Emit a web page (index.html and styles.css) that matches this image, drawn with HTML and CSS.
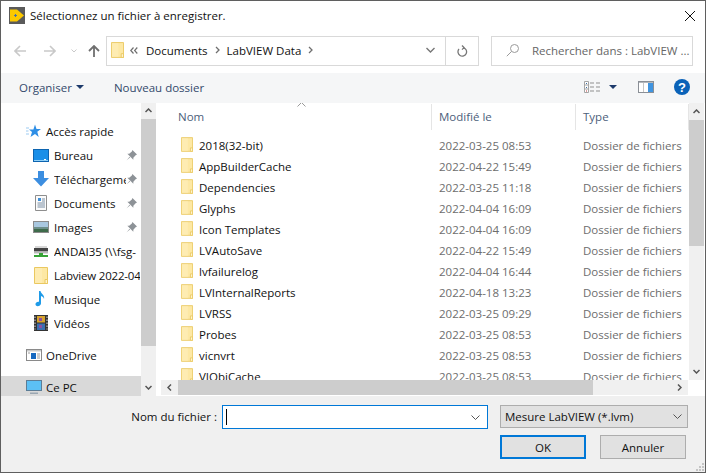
FILE: index.html
```html
<!DOCTYPE html>
<html>
	<head>
		<meta charset="UTF-8">
		<title>Sélectionnez un fichier à enregistrer.</title>
		<link rel="stylesheet" href="styles.css">
	</head>
	<body>
		<svg class="defs" width="0" height="0">
			<symbol id="folder" viewBox="0 0 14 17">
				<path d="M.5 .5H13.5V16.5H.5Z" fill="#fde8a4" stroke="#eac860"/>
				<path d="M1 1H8V16H1Z" fill="#fff0c0" opacity=".5"/>
				<path d="M11 12.5H13.5V16.5H11Z" fill="#fff4cf" stroke="#eac860"/>
			</symbol>
			<symbol id="pin" viewBox="0 0 12 12">
				<path d="M7 0 12 5 10.500 5.600 8 8.500 8 10.500 1.500 4 3.500 4 6.400 1.500Z" fill="#8d9297"/>
				<path d="M4 7.400 .5 11.500 4.600 8Z" fill="#8d9297"/>
			</symbol>
		</svg>

		<div id="box">
			<header class="title">
				<svg class="app" width="16" height="17" viewBox="0 0 16 17">
					<rect width="16" height="17" fill="#5a5a5a"/>
					<path d="M1 2.500H8L15 8.500 8 14.500H1Z" fill="#fcc800"/>
					<path d="M5 8.500H8M6.500 7V10" stroke="#4a6fa8"/>
				</svg>
				<span class="title-text">Sélectionnez un fichier à enregistrer.</span>
				<svg class="close" width="10" height="10" viewBox="0 0 10 10"><path d="M0 0 10 10M10 0 0 10" stroke="#111" stroke-width="1"/></svg>
			</header>

			<div class="nav">
				<svg class="ico-back" width="12" height="12" viewBox="0 0 12 12"><path d="M6 1 1 6 6 11M1 6H12" fill="none" stroke="#c9c9c9" stroke-width="1.6"/></svg>
				<svg class="ico-fwd" width="12" height="12" viewBox="0 0 12 12"><path d="M6 1 11 6 6 11M11 6H0" fill="none" stroke="#c9c9c9" stroke-width="1.6"/></svg>
				<svg class="ico-drop" width="6" height="4" viewBox="0 0 6 4"><path d="M.5 .5 3 3 5.5 .5" fill="none" stroke="#c9c9c9"/></svg>
				<svg class="ico-up" width="12" height="12" viewBox="0 0 12 12"><path d="M1 6 6 1 11 6M6 1V12" fill="none" stroke="#6f6f6f" stroke-width="1.8"/></svg>

				<div class="address">
					<svg class="addr-folder" width="13" height="16"><use href="#folder"/></svg>
					<svg class="crumb-more" width="8" height="7" viewBox="0 0 8 7"><path d="M3.500 .5 .8 3.500 3.500 6.500M7.300 .5 4.600 3.500 7.300 6.500" fill="none" stroke="#6f6f6f" stroke-width="1.200"/></svg>
					<span class="crumb">Documents</span>
					<svg class="crumb-sep" width="5" height="8" viewBox="0 0 5 8"><path d="M1 1 4 4 1 7" fill="none" stroke="#6f6f6f" stroke-width="1.3"/></svg>
					<span class="crumb">LabVIEW Data</span>
					<svg class="crumb-sep" width="5" height="8" viewBox="0 0 5 8"><path d="M1 1 4 4 1 7" fill="none" stroke="#6f6f6f" stroke-width="1.3"/></svg>
					<span class="grow"></span>
					<svg class="addr-drop" width="9" height="6" viewBox="0 0 9 6"><path d="M.5 1 4.5 5 8.5 1" fill="none" stroke="#777" stroke-width="1.4"/></svg>
					<div class="refresh">
						<svg width="11" height="12" viewBox="0 0 11 12"><path d="M6.2 2.6A4.3 4.3 0 1 1 2 4M5 .5 7 2.6 5 4.6" fill="none" stroke="#777" stroke-width="1.3"/></svg>
					</div>
				</div>

				<div class="search">
					<svg width="14" height="14" viewBox="0 0 14 14"><circle cx="8.5" cy="5.5" r="4" fill="none" stroke="#9a9a9a"/><path d="M5.5 8.5 .8 13.2" stroke="#9a9a9a"/></svg>
					<span>Rechercher dans : LabVIEW ...</span>
				</div>
			</div>

			<div class="toolbar">
				<span class="tool">Organiser</span>
				<span class="caret"></span>
				<span class="tool new-folder">Nouveau dossier</span>
				<span class="grow"></span>
				<svg class="view-ico" width="16" height="12" viewBox="0 0 16 12">
					<path d="M.5 .5H4.5V11.5H.5Z" fill="#fff" stroke="#a5a5a5"/>
					<path d="M1 4H4M1 8H4" stroke="#a5a5a5"/>
					<path d="M2 2H3V3H2Z" fill="#3a6ea5"/><path d="M2 6H3V7H2Z" fill="#3a6ea5"/><path d="M2 9.500H3V10.500H2Z" fill="#c03a3a"/>
					<path d="M6 2H10M12 2H16M6 6H10M12 6H16M6 10H10M12 10H16" stroke="#8f8f8f"/>
				</svg>
				<span class="caret view-caret"></span>
				<svg class="pane-ico" width="16" height="12" viewBox="0 0 16 12">
					<rect x=".5" y=".5" width="15" height="11" fill="#fff" stroke="#8a8f96"/>
					<rect x="10" y="2" width="5" height="9" fill="#3f94e0"/>
					<path d="M5.500 1V11" stroke="#c5c5c5"/>
					<path d="M1 1.500H15" stroke="#b5b8bc"/>
				</svg>
				<svg class="help" width="16" height="16" viewBox="0 0 16 16">
					<circle cx="8" cy="8" r="8" fill="#0a62b8"/>
					<text x="8" y="12.5" text-anchor="middle" class="help-mark">?</text>
				</svg>
			</div>

			<div id="main">
				<div class="side">
					<ul class="tree">
						<li class="head">
							<svg width="16" height="14" viewBox="0 0 16 14"><path d="M9 .5 10.5 5H15L11.3 7.8 12.7 13 9 10 4.5 13 6 8 3 5.5H7.4Z" fill="#2f8fe6"/><path d="M0 4H3M0 7H2.5M0 10H3" stroke="#9ccbf2"/></svg>
							<span>Accès rapide</span>
						</li>
						<li class="sub">
							<svg width="16" height="13" viewBox="0 0 16 13"><rect x=".5" y=".5" width="15" height="12" fill="#1a8fe8" stroke="#0d64b0"/><path d="M1 11.5H15" stroke="#8fd0f8"/><path d="M11 10.5H13" stroke="#fff"/></svg>
							<span class="label">Bureau</span>
							<svg class="pin" width="11" height="11"><use href="#pin"/></svg>
						</li>
						<li class="sub">
							<svg width="16" height="16" viewBox="0 0 16 16"><path d="M5 0H11V7H16L8 15.5 0 7H5Z" fill="#3c8ee0"/></svg>
							<span class="label">Téléchargements</span>
							<svg class="pin" width="11" height="11"><use href="#pin"/></svg>
						</li>
						<li class="sub">
							<svg width="16" height="16" viewBox="0 0 16 16"><path d="M2.5 .5H13.5V15.5H2.5Z" fill="#fbfbfb" stroke="#8e8e8e"/><path d="M5 3H8V6H5Z" fill="#3f8fd8"/><path d="M9 4H12M9 6H12M4.500 8H12M4.500 10H12M4.500 12H12" stroke="#7b8ea3"/></svg>
							<span class="label">Documents</span>
							<svg class="pin" width="11" height="11"><use href="#pin"/></svg>
						</li>
						<li class="sub">
							<svg width="16" height="12" viewBox="0 0 16 12"><rect x=".5" y=".5" width="15" height="11" fill="#dbe7ef" stroke="#8b8b8b"/><path d="M1 6H15V8H1Z" fill="#6d8f8a"/><path d="M1 8H15V11H1Z" fill="#3e6b4b"/><path d="M1 1H15V6H1Z" fill="#a9c8e0"/></svg>
							<span class="label">Images</span>
							<svg class="pin" width="11" height="11"><use href="#pin"/></svg>
						</li>
						<li class="sub">
							<svg width="14" height="13" viewBox="0 0 14 13"><path d="M1 1H13V6H1Z" fill="#d8d8d8"/><path d="M0 3H14V6.500H0Z" fill="#444"/><path d="M0 6.500H14V8.500H0Z" fill="#b9b9b9"/><path d="M5 8H9V10H14V12H0V10H5Z" fill="#36a336"/></svg>
							<span class="label wide">ANDAI35 (\\fsg-</span>
						</li>
						<li class="sub">
							<svg width="14" height="17"><use href="#folder"/></svg>
							<span class="label wide tight">Labview 2022-04</span>
						</li>
						<li class="sub">
							<svg width="16" height="16" viewBox="0 0 16 16"><path d="M6 0H7.500C8 3 12 4 11 8 10.500 6 9.500 5.500 8 5V12.500C8 15 3 16.500 2.500 13.500 2.200 11.500 4.500 10.200 6 10.800Z" fill="#1f9be8"/></svg>
							<span class="label">Musique</span>
						</li>
						<li class="sub">
							<svg width="14" height="16" viewBox="0 0 14 16"><rect width="14" height="16" fill="#333"/><path d="M3 1H11V7.500H3Z" fill="#d6a22e"/><path d="M3 8.500H11V15H3Z" fill="#3b6fb0"/><path d="M5 3H8V6H5ZM5 10H8V13H5Z" fill="#8d4fa0"/><path d="M1 1.500V14.500M13 1.500V14.500" stroke="#ddd" stroke-dasharray="1.500 1.500"/></svg>
							<span class="label">Vidéos</span>
						</li>
						<li class="head gap">
							<svg width="16" height="12" viewBox="0 0 16 12"><rect x=".5" y=".5" width="15" height="11" fill="#fff" stroke="#8a8a8a"/><path d="M1 1H15V2.500H1Z" fill="#c9c9c9"/><path d="M5 4H10V10H5Z" fill="#1568c0"/><path d="M11 5H14M11 7H14M11 9H14M2 4H4" stroke="#9a9a9a"/></svg>
							<span>OneDrive</span>
						</li>
						<li class="head gap selected">
							<svg width="16" height="15" viewBox="0 0 16 15"><rect x=".5" y=".5" width="15" height="10" fill="#5cc0f5" stroke="#5c7d96"/><path d="M4 12.500H12V14H4Z" fill="#9aa7b2"/></svg>
							<span>Ce PC</span>
						</li>
					</ul>
					<div class="vbar side-bar">
						<svg class="bar-arrow" width="7" height="5" viewBox="0 0 7 5"><path d="M.5 4 3.500 1 6.500 4" fill="none" stroke="#555" stroke-width="1.500"/></svg>
						<div class="thumb"></div>
						<svg class="bar-arrow" width="7" height="5" viewBox="0 0 7 5"><path d="M.5 1 3.500 4 6.500 1" fill="none" stroke="#555" stroke-width="1.500"/></svg>
					</div>
				</div>

				<div class="files">
					<div class="files-top">
						<div class="list">
							<div class="cols">
								<div class="col col-name">
									<span>Nom</span>
									<svg class="sort" width="9" height="5" viewBox="0 0 9 5"><path d="M.5 4.500 4.500 .5 8.500 4.500" fill="none" stroke="#9a9a9a"/></svg>
								</div>
								<div class="col">Modifié le</div>
								<div class="col">Type</div>
							</div>
							<div class="rows" id="rows"></div>
						</div>
						<div class="vbar list-bar">
							<svg class="bar-arrow" width="7" height="5" viewBox="0 0 7 5"><path d="M.5 4 3.500 1 6.500 4" fill="none" stroke="#555" stroke-width="1.500"/></svg>
							<div class="thumb"></div>
							<svg class="bar-arrow" width="7" height="5" viewBox="0 0 7 5"><path d="M.5 1 3.500 4 6.500 1" fill="none" stroke="#555" stroke-width="1.500"/></svg>
						</div>
					</div>
					<div class="files-bottom">
						<div class="hbar">
							<svg class="hbar-arrow" width="5" height="7" viewBox="0 0 5 7"><path d="M4 .5 1 3.500 4 6.500" fill="none" stroke="#555" stroke-width="1.500"/></svg>
							<div class="hthumb"></div>
							<svg class="hbar-arrow" width="5" height="7" viewBox="0 0 5 7"><path d="M1 .5 4 3.500 1 6.500" fill="none" stroke="#555" stroke-width="1.500"/></svg>
						</div>
						<div class="corner"></div>
					</div>
				</div>
			</div>

			<footer class="bottom">
				<div class="line-one">
					<label class="file-label">Nom du fichier :</label>
					<div class="file-input">
						<span class="cursor"></span>
						<svg width="9" height="5" viewBox="0 0 9 5"><path d="M.5 .5 4.500 4.500 8.500 .5" fill="none" stroke="#555"/></svg>
					</div>
					<div class="file-type">
						<span>Mesure LabVIEW (*.lvm)</span>
						<svg width="9" height="5" viewBox="0 0 9 5"><path d="M.5 .5 4.500 4.500 8.500 .5" fill="none" stroke="#555"/></svg>
					</div>
				</div>
				<div class="line-two">
					<button class="btn btn-ok">OK</button>
					<button class="btn">Annuler</button>
				</div>
				<svg class="grip" width="8" height="8" viewBox="0 0 8 8"><path d="M6 0H8V2H6ZM3 3H5V5H3ZM6 3H8V5H6ZM0 6H2V8H0ZM3 6H5V8H3ZM6 6H8V8H6Z" fill="#c4c4c4"/></svg>
			</footer>
		</div>

		<script>
			var data = [
				['2018(32-bit)', '2022-03-25 08:53'],
				['AppBuilderCache', '2022-04-22 15:49'],
				['Dependencies', '2022-03-25 11:18'],
				['Glyphs', '2022-04-04 16:09'],
				['Icon Templates', '2022-04-04 16:09'],
				['LVAutoSave', '2022-04-22 15:49'],
				['lvfailurelog', '2022-04-04 16:44'],
				['LVInternalReports', '2022-04-18 13:23'],
				['LVRSS', '2022-03-25 09:29'],
				['Probes', '2022-03-25 08:53'],
				['vicnvrt', '2022-03-25 08:53'],
				['VIObjCache', '2022-03-25 08:53']
			];
			var html = '';
			for (var i = 0; i < data.length; i++) {
				html += '<div class="row"><div class="cell-name"><svg width="12" height="15"><use href="#folder"/></svg>' +
					'<span>' + data[i][0] + '</span></div><div class="cell-date">' + data[i][1] + '</div>' +
					'<div class="cell-type">Dossier de fichiers</div></div>';
			}
			document.getElementById('rows').innerHTML = html;
		</script>
	</body>
</html>
```

FILE: styles.css
```css
*{
	margin:0; padding:0;
	list-style: none;
	box-sizing: border-box;
}

html,body{
	width:706px;
	height:473px;
	overflow:hidden;
	background:white;
}

body{
	font-family:"Open Sans","Noto Sans",sans-serif;
	font-size:11.5px;
	color:#111;
}

svg{
	display:block;
	flex-shrink:0;
}

.defs{
	position:absolute;
}

.grow{
	flex-grow:1;
}

#box{
	width:706px;
	height:473px;
	display:flex;
	flex-direction:column;
	border:1px solid #5f5f5f;
	background:white;
}

/* title */
.title{
	height:29px;
	padding:6px 10px 0 8px;
	display:flex;
	align-items:flex-start;
}

.title-text{
	margin-left:5px;
	line-height:18px;
	flex-grow:1;
}

.close{
	margin-top:4px;
}

/* back, forward, address, search */
.nav{
	height:43px;
	padding:6px 11px 7px 13px;
	display:flex;
	align-items:center;
}

.ico-fwd{
	margin-left:18px;
}

.ico-drop{
	margin-left:15px;
}

.ico-up{
	margin-left:11px;
}

.address{
	width:373px;
	height:30px;
	margin-left:6px;
	border:1px solid #d9d9d9;
	display:flex;
	align-items:center;
	padding:0 0 2px 4px;
}

.crumb-more{
	margin:0 1px 0 6px;
}

.crumb{
	margin-left:7px;
}

.crumb-sep{
	margin-left:7px;
	margin-right:0;
}

.addr-drop{
	margin-right:10px;
}

.refresh{
	width:33px;
	height:28px;
	align-self:flex-start;
	border-left:1px solid #d9d9d9;
	display:flex;
	align-items:center;
	justify-content:center;
}

.search{
	width:202px;
	height:30px;
	margin-left:12px;
	border:1px solid #d9d9d9;
	display:flex;
	align-items:center;
	padding:0 0 2px 14px;
	color:#666;
	white-space:nowrap;
}

.search span{
	margin-left:12px;
}

/* toolbar */
.toolbar{
	height:30px;
	background:#f5f6f7;
	display:flex;
	align-items:center;
	padding:0 15px 2px 18px;
}

.tool{
	color:#33496b;
}

.caret{
	width:0;
	height:0;
	margin-left:4px;
	border-left:4px solid transparent;
	border-right:4px solid transparent;
	border-top:4px solid #1d3a6b;
}

.new-folder{
	margin-left:30px;
}

.view-caret{
	margin-left:9px;
}

.pane-ico{
	margin-left:21px;
}

.help{
	margin-left:20px;
}

.help-mark{
	font-family:"Liberation Sans",sans-serif;
	font-size:13px;
	font-weight:bold;
	fill:white;
}

/* main area */
#main{
	height:293px;
	display:flex;
}

.side{
	width:155px;
	display:flex;
}

.tree{
	width:140px;
	height:293px;
	overflow:hidden;
	padding-top:16px;
}

.tree li{
	height:24px;
	display:flex;
	align-items:center;
	white-space:nowrap;
}

.head{
	padding-left:25px;
}

.head span{
	margin-left:4px;
}

.head.gap{
	margin-top:8px;
}

.tree .selected{
	margin-top:9px;
	padding-bottom:2px;
	background:#d9d9d9;
}

.sub{
	padding-left:32px;
}

.sub > svg:first-child{
	width:16px;
}

.label{
	margin-left:5px;
	width:72px;
	overflow:hidden;
}

.label.wide{
	width:86px;
}

.label.tight{
	letter-spacing:-.2px;
}

.vbar{
	width:15px;
	background:#f0f0f0;
	display:flex;
	flex-direction:column;
	align-items:center;
}

.bar-arrow{
	margin:5px 0 6px;
}

.thumb{
	width:15px;
	background:#cdcdcd;
}

.side-bar .thumb{
	height:227px;
}

.side-bar .bar-arrow:last-child{
	margin-top:auto;
}

.files{
	width:544px;
	margin-left:5px;
	display:flex;
	flex-direction:column;
}

.files-top{
	height:277px;
	display:flex;
}

.list{
	width:528px;
	overflow:hidden;
}

.cols{
	display:grid;
	grid-template-columns:271px 144px 113px;
	height:26px;
	margin-top:1px;
}

.col{
	color:#4c607a;
	line-height:26px;
	padding-left:7px;
	border-right:1px solid #e5e5e5;
}

.col-name{
	padding-left:17px;
	display:flex;
	position:relative;
}

.sort{
	position:absolute;
	left:136px;
	top:-2px;
}

.rows{
	padding-top:5px;
	height:250px;
	overflow:hidden;
}

.row{
	height:21px;
	display:grid;
	grid-template-columns:271px 145px 112px;
	align-items:center;
	white-space:nowrap;
}

.cell-name{
	display:flex;
	align-items:center;
	padding-left:20px;
}

.cell-name svg{
	margin-bottom:2px;
}

.cell-name span{
	margin-left:6px;
}

.cell-date,
.cell-type{
	color:#6d6d6d;
	padding-left:7px;
}

.cell-type{
	margin-left:-1px;
}

.list-bar{
	width:15px;
}

.list-bar .bar-arrow:first-child{
	margin:6px 0 6px;
}

.list-bar .thumb{
	height:126px;
}

.list-bar .bar-arrow:last-child{
	margin-top:auto;
}

.files-bottom{
	height:16px;
	display:flex;
}

.hbar{
	width:527px;
	height:15px;
	background:#f0f0f0;
	display:flex;
	align-items:center;
}

.hbar-arrow{
	margin:0 6px;
}

.hthumb{
	width:415px;
	height:15px;
	background:#cdcdcd;
}

.hbar-arrow:last-child{
	margin-left:auto;
}

/* file name, type, buttons */
.bottom{
	flex-grow:1;
	background:#f0f0f0;
	position:relative;
	padding:9px 17px 0 0;
	display:flex;
	flex-direction:column;
}

.line-one{
	display:flex;
	align-items:flex-start;
}

.file-label{
	width:216px;
	line-height:24px;
	text-align:right;
}

.file-input{
	width:266px;
	height:24px;
	margin-left:5px;
	background:white;
	border:1px solid #0078d7;
	display:flex;
	align-items:center;
	justify-content:space-between;
	padding:0 7px 0 3px;
}

.cursor{
	width:1px;
	height:16px;
	background:black;
}

.file-type{
	width:188px;
	height:23px;
	margin-left:12px;
	background:#e1e1e1;
	border:1px solid #adadad;
	display:flex;
	align-items:center;
	justify-content:space-between;
	padding:0 5px 0 4px;
}

.line-two{
	display:flex;
	justify-content:flex-end;
	margin-top:6px;
	gap:14px;
	padding-right:2px;
}

.btn{
	width:86px;
	height:24px;
	background:#e1e1e1;
	border:1px solid #adadad;
	font-family:inherit;
	font-size:inherit;
	color:#111;
}

.btn-ok{
	border:2px solid #0078d7;
}

.grip{
	position:absolute;
	right:1px;
	bottom:1px;
}
```
